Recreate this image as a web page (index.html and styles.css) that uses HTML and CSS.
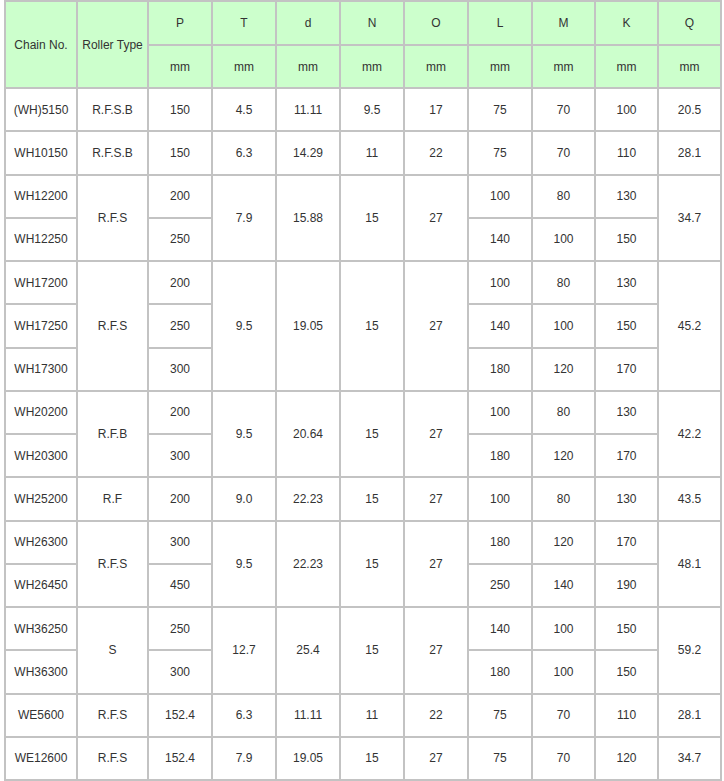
FILE: index.html
```html
<!DOCTYPE html>
<html>
<head>
<meta charset="utf-8">
<link rel="stylesheet" href="styles.css">
</head>
<body>
<table class="spec">
<colgroup>
<col class="c-chain"><col class="c-roller"><col class="c-p"><col class="c-n"><col class="c-n"><col class="c-n"><col class="c-n"><col class="c-n"><col class="c-m"><col class="c-m"><col class="c-q">
</colgroup>
<thead>
<tr class="h1"><th rowspan="2">Chain No.</th><th rowspan="2">Roller Type</th><th>P</th><th>T</th><th>d</th><th>N</th><th>O</th><th>L</th><th>M</th><th>K</th><th>Q</th></tr>
<tr class="h2"><th>mm</th><th>mm</th><th>mm</th><th>mm</th><th>mm</th><th>mm</th><th>mm</th><th>mm</th><th>mm</th></tr>
</thead>
<tbody>
<tr><td>(WH)5150</td><td>R.F.S.B</td><td>150</td><td>4.5</td><td>11.11</td><td>9.5</td><td>17</td><td>75</td><td>70</td><td>100</td><td>20.5</td></tr>
<tr><td>WH10150</td><td>R.F.S.B</td><td>150</td><td>6.3</td><td>14.29</td><td>11</td><td>22</td><td>75</td><td>70</td><td>110</td><td>28.1</td></tr>
<tr><td>WH12200</td><td rowspan="2">R.F.S</td><td>200</td><td rowspan="2">7.9</td><td rowspan="2">15.88</td><td rowspan="2">15</td><td rowspan="2">27</td><td>100</td><td>80</td><td>130</td><td rowspan="2">34.7</td></tr>
<tr><td>WH12250</td><td>250</td><td>140</td><td>100</td><td>150</td></tr>
<tr><td>WH17200</td><td rowspan="3">R.F.S</td><td>200</td><td rowspan="3">9.5</td><td rowspan="3">19.05</td><td rowspan="3">15</td><td rowspan="3">27</td><td>100</td><td>80</td><td>130</td><td rowspan="3">45.2</td></tr>
<tr><td>WH17250</td><td>250</td><td>140</td><td>100</td><td>150</td></tr>
<tr><td>WH17300</td><td>300</td><td>180</td><td>120</td><td>170</td></tr>
<tr><td>WH20200</td><td rowspan="2">R.F.B</td><td>200</td><td rowspan="2">9.5</td><td rowspan="2">20.64</td><td rowspan="2">15</td><td rowspan="2">27</td><td>100</td><td>80</td><td>130</td><td rowspan="2">42.2</td></tr>
<tr><td>WH20300</td><td>300</td><td>180</td><td>120</td><td>170</td></tr>
<tr><td>WH25200</td><td>R.F</td><td>200</td><td>9.0</td><td>22.23</td><td>15</td><td>27</td><td>100</td><td>80</td><td>130</td><td>43.5</td></tr>
<tr><td>WH26300</td><td rowspan="2">R.F.S</td><td>300</td><td rowspan="2">9.5</td><td rowspan="2">22.23</td><td rowspan="2">15</td><td rowspan="2">27</td><td>180</td><td>120</td><td>170</td><td rowspan="2">48.1</td></tr>
<tr><td>WH26450</td><td>450</td><td>250</td><td>140</td><td>190</td></tr>
<tr><td>WH36250</td><td rowspan="2">S</td><td>250</td><td rowspan="2">12.7</td><td rowspan="2">25.4</td><td rowspan="2">15</td><td rowspan="2">27</td><td>140</td><td>100</td><td>150</td><td rowspan="2">59.2</td></tr>
<tr><td>WH36300</td><td>300</td><td>180</td><td>100</td><td>150</td></tr>
<tr><td>WE5600</td><td>R.F.S</td><td>152.4</td><td>6.3</td><td>11.11</td><td>11</td><td>22</td><td>75</td><td>70</td><td>110</td><td>28.1</td></tr>
<tr><td>WE12600</td><td>R.F.S</td><td>152.4</td><td>7.9</td><td>19.05</td><td>15</td><td>27</td><td>75</td><td>70</td><td>120</td><td>34.7</td></tr>
</tbody>
</table>
</body>
</html>
```
FILE: styles.css
```css
html, body {
  margin: 0;
  padding: 0;
  background: #ffffff;
}
body {
  padding: 0 0 0 4px;
  font-family: "Liberation Sans", Arial, sans-serif;
  font-size: 12px;
  color: #333333;
}
.spec {
  border-collapse: collapse;
  table-layout: fixed;
  width: 718px;
}
.c-chain { width: 72px; }
.c-roller { width: 71px; }
.c-p { width: 64px; }
.c-n { width: 64px; }
.c-m { width: 63px; }
.c-q { width: 63px; }
.spec th,
.spec td {
  border: 2px solid #c3c3c3;
  text-align: center;
  vertical-align: middle;
  padding: 0;
  font-weight: normal;
}
.spec th {
  background: #ccffcc;
}
.spec .h1 th { height: 42px; }
.spec .h2 th { height: 41px; }
.spec td { height: 41.25px; }
```
